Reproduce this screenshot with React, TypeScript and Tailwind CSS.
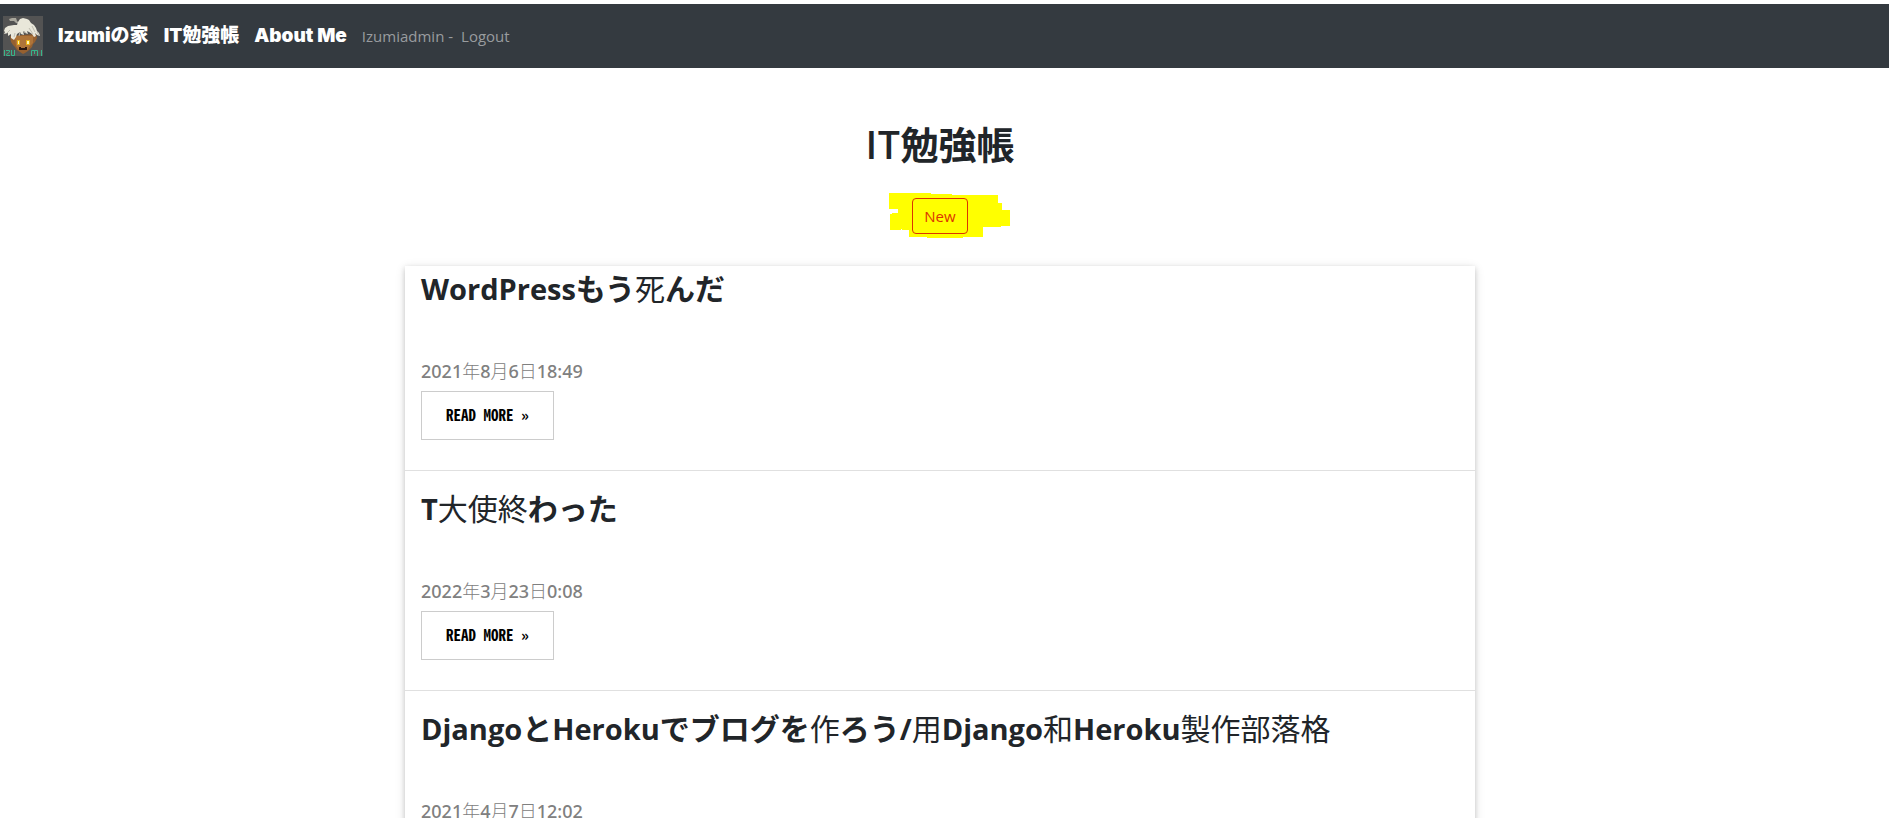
import React from "react";

type Post = { title: string; date: string };

const posts: Post[] = [
  { title: "WordPressもう死んだ", date: "2021年8月6日18:49" },
  { title: "T大使終わった", date: "2022年3月23日0:08" },
  { title: "DjangoとHerokuでブログを作ろう/用Django和Heroku製作部落格", date: "2021年4月7日12:02" },
];

// Splits text into runs of kanji, kana and everything else so each gets its own style.
function splitRuns(text: string): string[] {
  return text.split(/([\u4e00-\u9fff]+|[\u3040-\u30ff]+)/).filter(Boolean);
}

function MixedText({ text, kanjiClass, kanaClass }: { text: string; kanjiClass: string; kanaClass?: string }) {
  return (
    <>
      {splitRuns(text).map((run, i) => {
        if (/^[\u4e00-\u9fff]/.test(run)) {
          return (
            <span key={i} className={kanjiClass}>
              {run}
            </span>
          );
        }
        if (/^[\u3040-\u30ff]/.test(run)) {
          return (
            <span key={i} className={kanaClass}>
              {run}
            </span>
          );
        }
        return <React.Fragment key={i}>{run}</React.Fragment>;
      })}
    </>
  );
}

function Logo() {
  return (
    <svg width="40" height="40" viewBox="0 0 40 40" role="img" aria-label="Izumi">
      <rect width="40" height="40" fill="#535353" />
      <path d="M7 20L33 18L34 22L32 26L30 28L29 31L25 35L22 37L20 38L17 36L14 34L12 31L10 29L8 26Z" fill="#96602f" />
      <path d="M12 20H30V27L27 30L24 34H16L13 30Z" fill="#ae7439" />
      <path d="M6 3L9 2H13L14 5L17 8L13 7L11 5L7 5Z" fill="#a9a79d" />
      <path
        d="M20 2L24 3L26 4L28 7L31 9L33 12L34 15L36 17L37 20L34 19L32 17L33 20L31 21L29 18L26 16L24 15L25 18L22 17L20 15L21 19L18 18L17 16L14 18L13 21L11 24L8 22L8 18L5 20L5 17L1 18L2 16L1 15L2 12L5 10L11 9L14 9L15 6L17 3Z"
        fill="#e9e7da"
      />
      <path
        d="M29 10L32 16M26 12L30 18M17 16L16 20M12 17L11 21M7 14L4 17M34 16L36 19M21 15L23 17"
        fill="none"
        stroke="#bfbdb0"
        strokeWidth="1"
      />
      <path d="M14 24H17V29H14ZM23 24H27V29H23Z" fill="#e6ae16" />
      <path d="M15 25H16V28H15ZM24 25H26V28H24Z" fill="#fff6b8" />
      <path d="M16 31H18V32H22V31H24V34H16Z" fill="#2b1710" />
      <path
        d="M1.5 34V40M3 34.5H6.5V36L3.5 38.5V39.5H7M8.5 34V39.5H11.5V34M28.5 40V34.5H34.5V40M31.5 34V38M38.5 34V40"
        fill="none"
        stroke="#36b58a"
        strokeWidth="1"
      />
    </svg>
  );
}

function Highlight() {
  return (
    <svg
      className="absolute left-1/2 top-1/2 -ml-[51px] -mt-[23px]"
      width="121"
      height="45"
      viewBox="0 0 121 45"
      aria-hidden="true"
      shapeRendering="crispEdges"
    >
      <path
        d="M0 0H42V1H63V2H109V10H113V17H121V33H112V34H94V44H74V45H38V44H20V37H13V36H12V37H1V21H3V20H9V16H0Z"
        fill="#ffff00"
      />
    </svg>
  );
}

export default function App() {
  return (
    <div className="h-screen overflow-y-auto bg-white pt-1 font-['Open_Sans','Noto_Sans_CJK_JP',sans-serif] text-[#212529] [scrollbar-width:none]">
      <nav className="flex h-16 items-center bg-[#343a40] pl-[3px]">
        <a href="#home" className="mr-[15px]">
          <Logo />
        </a>
        <div className="flex items-center gap-[15px] font-['Inter','Noto_Sans_CJK_JP',sans-serif] text-[19px] font-black leading-7 text-white">
          <a href="#home">Izumiの家</a>
          <a href="#notes">IT勉強帳</a>
          <a href="#about">About Me</a>
        </div>
        <div className="ml-[15px] flex gap-2 text-[15px] leading-6 text-[#999c9f]">
          <span>Izumiadmin -</span>
          <a href="#logout">Logout</a>
        </div>
      </nav>

      <main className="pr-[9px]">
        <header className="flex flex-col items-center pt-[51px]">
          <h1 className="font-['Noto_Sans_CJK_JP',sans-serif] text-[38px] font-medium leading-12">
            IT<span className="font-bold">勉強帳</span>
          </h1>
          <div className="relative mt-[31px]">
            <Highlight />
            <button
              type="button"
              className="relative block h-9 rounded border border-[#dc3500] px-[11px] text-[15px] leading-6 text-[#dc3500]"
            >
              New
            </button>
          </div>
        </header>

        <section className="mx-auto mt-8 max-w-[1070px] bg-white shadow-[0_2px_5px_rgba(0,0,0,0.16),0_2px_10px_rgba(0,0,0,0.12)]">
          {posts.map((post) => (
            <article key={post.title} className="border-b border-[#e0e0e0] px-4 pb-[30px] pt-5 first:pt-[5px]">
              <h2 className="text-[29px] font-bold leading-9">
                <MixedText text={post.title} kanjiClass="text-[30px] font-normal" kanaClass="text-[30px]" />
              </h2>
              <p className="mt-[50px] font-['Noto_Sans','Noto_Sans_CJK_JP',sans-serif] text-lg font-medium leading-7 text-[#808080]">
                <MixedText text={post.date} kanjiClass="font-light" />
              </p>
              <button
                type="button"
                className="mt-[6px] block h-[49px] border border-[#cccccc] bg-white px-6 pb-[2px] font-['Noto_Sans_CJK_JP',sans-serif] text-[15px] font-bold leading-6 text-black [font-feature-settings:'hwid']"
              >
                READ MORE »
              </button>
            </article>
          ))}
        </section>
      </main>
    </div>
  );
}
